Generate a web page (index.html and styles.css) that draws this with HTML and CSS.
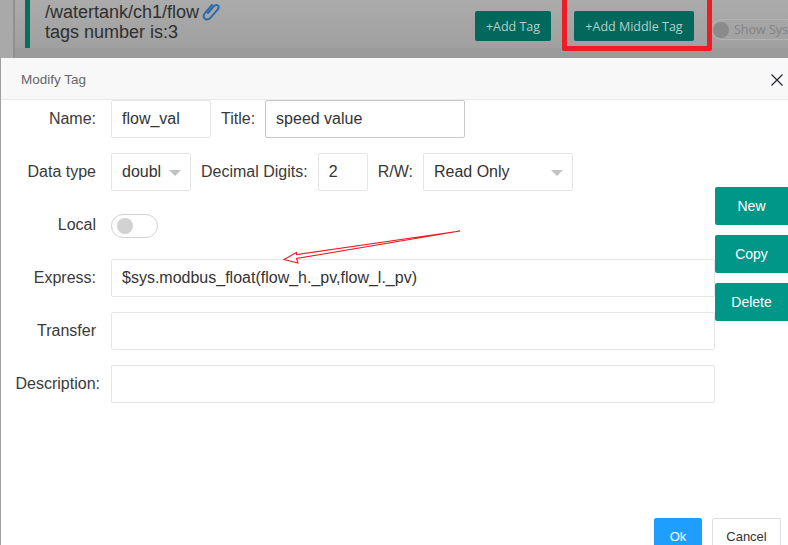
FILE: index.html
```html
<!DOCTYPE html>
<html lang="en">
<head>
<meta charset="utf-8">
<title>Modify Tag</title>
<link rel="stylesheet" href="styles.css">
</head>
<body>
<div class="page">
  <header class="topbar">
    <div class="strip"></div>
    <div class="panel">
      <div class="path-box">
        <div class="path-line">/watertank/ch1/flow
          <svg class="clip" width="18" height="19" viewBox="0 0 18 19"><path d="M6 11 L12 4.2 C13.4 2.7 15 2.6 16 3.6 C17 4.6 16.8 6.2 15.6 7.6 L8.6 15.6 C6.8 17.6 4.2 18 2.7 16.5 C1.2 15 1.6 12.6 3.2 10.8 L10 3" fill="none" stroke="#2a6cab" stroke-width="2" stroke-linecap="round"/></svg>
        </div>
        <div class="path-line">tags number is:3</div>
      </div>
      <div class="actions">
        <button class="dark-btn add-tag">+Add Tag</button>
        <button class="dark-btn add-middle">+Add Middle Tag</button>
        <div class="sys-toggle"><span class="sys-knob"></span><span class="sys-text">Show Sys</span></div>
      </div>
    </div>
  </header>

  <section class="modal">
    <div class="modal-head">
      <span class="modal-title">Modify Tag</span>
      <svg class="close" width="12" height="12" viewBox="0 0 12 12"><path d="M0.5 0.5 L11.5 11.5 M11.5 0.5 L0.5 11.5" stroke="#2b2b33" stroke-width="1.3" fill="none"/></svg>
    </div>
    <div class="modal-body">
      <div class="form">
        <div class="row">
          <label class="label">Name:</label>
          <input class="field w100" value="flow_val">
          <label class="text-label">Title:</label>
          <input class="field w200 strong" value="speed value">
        </div>
        <div class="row">
          <label class="label">Data type</label>
          <div class="select w80"><span class="select-text">doubl</span><i class="caret"></i></div>
          <label class="text-label">Decimal Digits:</label>
          <input class="field w50" value="2">
          <label class="text-label">R/W:</label>
          <div class="select w150"><span class="select-text">Read Only</span><i class="caret"></i></div>
        </div>
        <div class="row row-local">
          <label class="label label-up">Local</label>
          <div class="switch"><span class="switch-knob"></span></div>
        </div>
        <div class="row">
          <label class="label">Express:</label>
          <input class="field grow" value="$sys.modbus_float(flow_h._pv,flow_l._pv)">
        </div>
        <div class="row">
          <label class="label">Transfer</label>
          <input class="field grow" value="">
        </div>
        <div class="row">
          <label class="label label-wide">Description:</label>
          <input class="field grow" value="">
        </div>
      </div>
      <div class="side">
        <button class="side-btn">New</button>
        <button class="side-btn">Copy</button>
        <button class="side-btn">Delete</button>
      </div>
    </div>
    <div class="modal-foot">
      <button class="foot-btn ok">Ok</button>
      <button class="foot-btn cancel">Cancel</button>
    </div>
  </section>

  <div class="highlight"></div>
  <svg class="arrow" width="788" height="545" viewBox="0 0 788 545"><path d="M460 231 L296.5 254.5 L296.5 252.5 L284 259.5 L298 263 L296.5 258.5 Z" fill="#fff" stroke="#ee1c25" stroke-width="1.1" stroke-linejoin="miter"/></svg>
</div>
</body>
</html>
```

FILE: styles.css
```css
* { box-sizing: border-box; }
html, body { margin: 0; padding: 0; }
body { font-family: "Liberation Sans", Arial, sans-serif; color: #333; background: #fff; }
.page { position: relative; width: 788px; height: 545px; overflow: hidden; background: #a0a0a0; }

.topbar { display: flex; height: 58px; background: #9b9b9b; }
.strip { width: 15px; flex: none; background: linear-gradient(to right, #a9a9a9 0 13px, #8f9094 13px 15px); }
.panel { flex: 1; display: flex; height: 48px; padding-left: 10px; background: linear-gradient(to bottom, #ababab, #a0a0a0); }
.path-box { flex: 1; border-left: 5px solid #066f62; padding: 2px 0 0 15px; font-size: 18px; line-height: 20px; color: #2f2f2f; }
.path-line { white-space: nowrap; }
.clip { vertical-align: -3px; margin-left: -2px; }
.actions { display: flex; flex: none; align-items: flex-start; padding-top: 11px; width: 313px; overflow: hidden; }
.dark-btn { flex: none; height: 30px; border: 0; border-radius: 2px; background: #02685c; color: #b2d0ca; font-family: "Open Sans", sans-serif; font-size: 12.5px; padding: 0; }
.add-tag { width: 76px; margin-right: 23px; }
.add-middle { width: 120px; margin-right: 17px; }
.sys-toggle { display: flex; align-items: center; flex: none; width: 90px; height: 21px; margin-top: 8px; border: 1px solid #b3b3b3; border-radius: 11px 0 0 11px; border-right: 0; }
.sys-knob { width: 16px; height: 16px; border-radius: 50%; background: #8b8b8b; flex: none; margin-left: 1px; }
.sys-text { margin-left: 5px; font-family: "Open Sans", sans-serif; font-size: 12.5px; color: #838383; white-space: nowrap; }

.modal { margin-left: 1px; width: 787px; background: #fff; height: 487px; }
.modal-head { display: flex; align-items: center; justify-content: space-between; height: 42px; padding: 1px 5px 0 20px; background: #f8f8f8; border-bottom: 1px solid #e9e9e9; }
.modal-title { font-size: 13.5px; color: #666; }
.close { margin-top: 1px; }
.modal-body { display: flex; }
.form { width: 714px; flex: none; }
.side { flex: 1; display: flex; flex-direction: column; gap: 10px; padding-top: 87px; }
.side-btn { height: 38px; border: 0; border-radius: 2px 0 0 2px; background: #009688; color: #fff; font-family: "Liberation Sans", sans-serif; font-size: 14px; padding: 0; }

.row { display: flex; align-items: center; margin-bottom: 15px; font-size: 16px; }
.row-local { margin-top: 23px; margin-bottom: 21px; }
.label { width: 95px; margin-right: 15px; text-align: right; white-space: nowrap; flex: none; color: #3a3a3a; }
.label-wide { width: 99px; margin-right: 11px; }
.label-up { margin-bottom: 2px; }
.text-label { margin: 0 10px; white-space: nowrap; color: #3a3a3a; }
.field, .select { height: 38px; border: 1px solid #e6e6e6; border-radius: 2px; background: #fff; font-family: "Liberation Sans", sans-serif; font-size: 16px; color: #333; padding: 0 10px; outline: none; }
.field.strong { border-color: #c9c9c9; }
.w100 { width: 100px; } .w200 { width: 200px; } .w50 { width: 50px; }
.w80 { width: 80px; } .w150 { width: 150px; }
.grow { flex: 1; min-width: 0; }
.select { position: relative; display: flex; align-items: center; flex: none; }
.select-text { white-space: nowrap; }
.caret { position: absolute; right: 9px; top: 16px; width: 0; height: 0; border-left: 6px solid transparent; border-right: 6px solid transparent; border-top: 6px solid #c2c2c2; }
.switch { display: flex; align-items: center; width: 47px; height: 24px; border: 1px solid #d2d2d2; border-radius: 12px; padding-left: 5px; }
.switch-knob { width: 16px; height: 16px; border-radius: 50%; background: #d2d2d2; }

.modal-foot { display: flex; justify-content: flex-end; gap: 10px; padding-right: 7px; margin-top: 100px; }
.foot-btn { width: 48px; height: 36px; border-radius: 2px; font-family: "Liberation Sans", sans-serif; font-size: 13px; padding: 0; }
.ok { background: #1e9fff; border: 1px solid #1e9fff; color: #fff; }
.cancel { width: 69px; background: #fff; border: 1px solid #dedede; color: #333; }

.highlight { position: absolute; left: 562px; top: -5px; width: 150px; height: 56px; border: 5px solid #ee1c25; border-radius: 2px; }
.arrow { position: absolute; left: 0; top: 0; pointer-events: none; }
```
